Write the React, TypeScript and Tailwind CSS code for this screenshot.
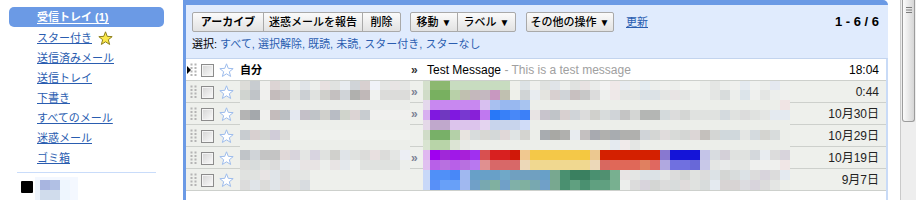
import React from 'react';

const BG = 'eceeea';
const rep = (c: string, n: number): string[] => Array(n).fill(c);

// pixelated (redacted) subject area, 10px cells, global grid from y=80, x=420
const SUBJECT: string[][] = [
  ['d4e0cc', ...rep('8cb870', 2), ...rep('c8dcc0', 6), 'eff0ec', 'dde3e6', 'eff0ee', 'e0e2e0', 'e0e4e8', 'eceeec', 'e0e2e0', 'e8e2e2', 'eaecea', 'f2f2f2', 'f0e8e8', 'e8ecf0', 'eceeec', 'e4ecf0', 'eceeec', 'f0f0ee', 'eceeec', 'f2f4f0', 'f2f4f0', 'eceeec', 'e4e6e4', 'eceeec', 'f0f0ee', 'e4eaf0', 'f0f2f0', 'eceeec', 'e4e8f0', 'eef0ee'],
  ['d0dcc8', ...rep('78b060', 2), 'b8d0a8', 'c0c0b0', 'c4b8bc', 'c4b8c0', 'c898c0', 'c0c0b0', 'eef0ea', 'd0d4d6', 'e8ecf0', 'e4e4e0', 'd8d0d0', 'd0d4d8', 'c8c0c0', 'c8c8c8', 'dcdcdc', 'eef0ee', 'eee8e8', 'e4e6e4', 'e4e6e4', 'dce2e6', 'dce2e6', 'e4e6e4', 'e8e4e4', 'e4e6e4', 'eceeec', 'eceeec', 'e4e6e4', 'd8dcdc', 'eceeec', 'dce4ea', 'eff0ee', 'e4e6e4', 'eceeec', 'eff0ee'],
  ['e4d8ec', ...rep('c888f0', 5), 'd8c0f0', 'a8c0f0', '98b8f0', '98b8f0', 'a8c4f0', ...rep(BG, 25), 'f0e4e4'],
  ['d8b0f0', '8018e0', '7038c0', '8018e0', '7838d0', '8820d8', 'c078f0', '2878f8', '3880f8', '4888f8', '3c80f8', 'e8e4e4', 'c8c4cc', 'c0c4c8', 'd8d0d0', 'd0d4d8', 'dcdcdc', 'd0d0cc', 'd8dcdc', 'd0d4d8', 'c4c4c4', 'd4d6d4', 'b4b6b4', 'b4b6b4', 'd4dadc', 'dcdcdc', 'd4d6d4', 'e0e2e0', 'e0e2e0', 'e0e2e0', 'd4dade', 'e0e2e0', 'dcdcdc', 'e0e2e0', 'e4e6e4', 'e4eaf0', 'e4eaf0'],
  ['e4d8e8', ...rep('c0a8cc', 2), ...rep('dcc4ec', 3), 'e4d4f0', ...rep('c8d4ec', 3), 'd0dcf8', ...rep(BG, 26)],
  ['d0dcc8', ...rep('78b068', 2), 'b4d0a8', 'e8e4e0', 'd8dcdc', 'd8d8d4', 'd4d8d8', 'e0d8d8', 'e0e4e4', 'd4d4d0', 'eceeea', 'a8acb0', 'a8a8a4', 'b0b0ae', 'e8ecf0', 'c4c0c0', 'a8aab0', 'b0b0ae', 'a8acb0', 'b0b0ae', 'b0b0ae', 'd0d4d8', 'd4d6d4', 'e0dcdc', 'd8dad8', 'd4d6d4', 'dcd6d6', 'c4c0bc', 'd4d6d4', 'd0d8dc', 'd0d8dc', 'e4e6e4', 'd4dade', 'd4d4d0', 'd8dcdc', 'eceeea'],
  ['d8e4d0', ...rep('b8d4a8', 2), 'dce4d4', 'e8eae6', ...rep(BG, 14), 'e4eaf0', 'f0eaea', 'e4e6e4', ...rep(BG, 15)],
  ['e0b8f0', 'a000f0', 'a028d8', 'a018e8', 'a820d8', 'a030f0', 'd85050', 'd82020', 'd82020', 'd01808', 'f0c890', ...rep('f4c848', 5), 'f4c840', 'ecc890', ...rep('d42000', 6), '8878d0', ...rep('1414d8', 3), 'c4c4e8', 'd8dce0', 'd4d0d8', 'e0e2e0', 'e0e2e0', 'd4d8dc', 'e8ecf0', 'dcdcdc', 'd8d4dc'],
  ['e0c0f0', 'b860e8', 'b870e0', 'b860e8', 'b870e0', 'b878f0', 'e09090', ...rep('d86868', 3), 'ecd8b8', ...rep('f0d890', 6), 'ecd8b8', 'd86860', 'e06858', 'e06858', 'e06858', 'e08060', 'e06860', 'b0a8e0', '7070e0', '7070e0', '6868d8', 'c8c8e8', 'e4e6e4', 'e8eaea', 'e4e6e4', 'e4e6e4', 'eff0ee', 'eff0ee', 'eff0ee', 'f0e6e6'],
  ['c8d8f8', '5090f8', '5090f8', '4888f8', 'a0b8f0', '68a0c8', '68a0c8', '68a0c8', '70a8c8', '70a0c0', '70a0c0', '70a0c0', '68a0c8', '78a890', '4a9070', '3a8060', '3a8060', '4a9070', '509070', '78b090', 'e8e4e4', 'e4e6e4', 'dce2e6', 'dce2e6', 'e4e6e4', 'dcdcdc', 'd4d6d4', 'e0e2e0', 'dcdcdc', 'dce2e6', 'd4d6d4', 'd8dcdc', 'dce2e6', 'dcdcdc', 'd8d4dc', 'dcdcdc', 'e4eaf0'],
  ['c8d8f8', '5890f8', '68a0f8', '68a0f8', 'a0b8f0', '70a0c8', '78a8b0', '80b0a0', '70a0c8', '80b0a8', '80b0a0', '78a8b0', '70a0c8', '78a890', '4a9070', '60a080', '4a9070', '60a080', '60a080', '78b090', 'eceeec', 'dcdcdc', 'd8d4dc', 'd4d6d4', 'dcdcdc', 'd8dcdc', 'e0dcdc', 'e0e2e0', 'd8dcdc', 'e4eaf0', 'd8d4d4', 'd8d4d4', 'dcdce0', 'd8d4dc', 'dcdcdc', 'e4e6e4', 'eceeea'],
];

// pixelated sender area, global grid from y=80, x=240
const SENDER: string[][] = [
  ['dcdcd8', 'c8ccd0', 'f0f0ee', 'dcd4d4', 'dcdcda', 'eceeec', 'e0e4e8', 'eceeec', 'e8e0e0', 'e0e2e0', 'e8ecf0', 'd0d4d8', 'd8d0d0', 'f0f2f8', 'e4e6e4', 'e8e4e4', 'e4e6e4'],
  ['d0d4d0', 'c0c4c8', 'f0f0ee', 'c4bcbc', 'c8c4c4', 'e0e2e0', 'ccd0d4', 'e0e2e0', 'd0d0cc', 'c4c0c0', 'd0d4d8', 'b0b0ae', 'c0b8b8', 'f0f2f0', 'dcdcda', 'dcdcda', 'dcdcda'],
  rep('ebedea', 17),
  ['b4b4b4', 'a4a8ac', 'f0f0ee', 'c4bcbc', 'bcc0c4', 'e4e8f0', 'c4c0c8', 'c0c4c8', 'd0d0cc', 'b8bcc4', 'd0d4cc', 'dcd4d4', 'c8ccd0', ...rep('f0f0ee', 4)],
  rep('edefeb', 17),
  ['c8ccd0', 'd8d0d0', 'd4d6d4', 'd0ccd8', 'dcdcda', ...rep('f0f2ee', 12)],
  rep(BG, 17),
  ['c0c4c8', 'd0d4d8', 'c4c4c4', 'c4c4c4', 'e0d8d8', 'd8d4dc', 'e4e6e4', 'd8d4e0', 'e0e2e0', 'd0d0cc', 'e0e4e8', 'e0e2e0', 'dcdcda', 'e8e0e0', 'dcdcda', 'e4e6e4', 'eceef4'],
  ['dcdcda', 'd8dcdc', 'e0e2e0', 'dcdcdc', 'e4e8ec', 'e8eaec', 'e8e4e4', 'e8e4e4', 'eceeec', 'e8e4e4', 'e4e8ec', 'eef0ee', 'e0e2e0', 'e0e2e0', 'e0e2e0', 'e0e2e0', 'eceeec'],
  ['e0e2e0', 'e0e2e0', 'e8e4e4', 'e0e4e8', 'dcdcdc', 'e4e6e4', 'e4e6e4'],
  ['dcdcdc', 'e0e4e8', 'dcdcda', 'e0e4e8', 'e0dcdc', 'e0e2e0', 'd8dce0'],
];

const NAV = ['送信済みメール', '送信トレイ', '下書き', 'すべてのメール', '迷惑メール', 'ゴミ箱'];

const ROWS = [
  { time: '0:44', chevron: true },
  { time: '10月30日', chevron: true },
  { time: '10月29日', chevron: false },
  { time: '10月19日', chevron: true },
  { time: '9月7日', chevron: false },
];

const STAR = 'M7.5 0.8 L9.26 5.37 L14.16 5.64 L10.35 8.73 L11.62 13.46 L7.5 10.8 L3.38 13.46 L4.65 8.73 L0.84 5.64 L5.74 5.37 Z';

function Mosaic({ grid, x, width, top }: { grid: string[][]; x: number; width: number; top: number }) {
  return (
    <svg width={width} height={22} viewBox={`${x} ${top} ${width} 22`} shapeRendering="crispEdges" className="block shrink-0">
      {grid.map((row, r) =>
        row.map((c, k) => <rect key={`${r}-${k}`} x={k * 10} y={r * 10} width={10} height={10} fill={`#${c}`} />)
      )}
    </svg>
  );
}

function StarOutline() {
  return (
    <svg width="15" height="15" viewBox="0 0 15 15" className="block">
      <path d={STAR} fill="#ffffff" stroke="#9dbcec" strokeWidth="1" strokeLinejoin="round" />
    </svg>
  );
}

function Dots() {
  return (
    <svg width="7" height="14" viewBox="0 0 7 14" className="block shrink-0">
      {[1.5, 5, 8.5, 12].map(y => (
        <g key={y}>
          <rect x="0.5" y={y - 1} width="2" height="2" fill="#b4b4b4" />
          <rect x="4.5" y={y - 1} width="2" height="2" fill="#b4b4b4" />
        </g>
      ))}
    </svg>
  );
}

function Checkbox() {
  return <div className="ml-[4px] h-[13px] w-[13px] shrink-0 border border-[#8c8c8c] bg-gradient-to-br from-[#d4d4d4] to-[#fbfbfb] shadow-[inset_0_0_0_1px_#f4f4f4]" />;
}

function Btn({ children, w, cls = '' }: { children: React.ReactNode; w: string; cls?: string }) {
  return (
    <div className={`${w} ${cls} flex h-[20px] items-center justify-center border border-[#a9a9a9] bg-gradient-to-b from-[#fbfbfb] to-[#e2e2e2] text-[11px] text-black`}>
      {children}
    </div>
  );
}

export default function App() {
  return (
    <div className="flex h-[200px] w-[916px] overflow-hidden bg-white font-['Liberation_Sans','Noto_Sans_CJK_JP',sans-serif]">
      {/* Labels */}
      <nav className="w-[182px] shrink-0 pt-[7px] text-[11px]">
        <div className="ml-[9px] flex h-[20px] w-[155px] items-center rounded-[5px] bg-[#6b9ae5] pl-[28px] font-bold text-white">
          <span className="inline-block border-b border-white leading-[12px]">受信トレイ (1)</span>
        </div>
        <div className="mt-[1px] flex h-[20px] items-center pl-[37px]">
          <span className="text-[#2a5db0] underline [text-decoration-skip-ink:none]">スター付き</span>
          <svg width="15" height="15" viewBox="0 0 15 15" className="ml-[6px] block">
            <path d={STAR} fill="#fbe84a" stroke="#8d7f1c" strokeWidth="1" strokeLinejoin="round" />
          </svg>
        </div>
        {NAV.map(n => (
          <div key={n} className="flex h-[20px] items-center pl-[37px]">
            <span className="text-[#2a5db0] underline [text-decoration-skip-ink:none]">{n}</span>
          </div>
        ))}
        <div className="ml-[17px] mt-[4px] h-px w-[139px] bg-[#c9dcfa]" />
        <div className="mt-[4px] flex h-[23px] items-start">
          <div className="ml-[21px] mt-[4px] h-[12px] w-[12px] rounded-[1px] bg-black" />
          <svg width="43" height="23" viewBox="0 0 43 23" shapeRendering="crispEdges" className="ml-[2px] block">
            <rect x="0" y="0" width="43" height="23" fill="#f4f8ff" />
            <rect x="0" y="3" width="5" height="20" fill="#eef4fc" />
            <rect x="5" y="3" width="10" height="10" fill="#a8b5e0" />
            <rect x="15" y="3" width="10" height="10" fill="#b1c0e4" />
            <rect x="5" y="13" width="20" height="10" fill="#d0dcec" />
            <rect x="25" y="3" width="10" height="20" fill="#eef6fe" />
          </svg>
        </div>
      </nav>

      {/* Mail panel */}
      <div className="ml-[1px] flex h-[200px] w-[705px] shrink-0 flex-col rounded-tr-[5px] border-l-[3px] border-t-[5px] border-[#6b9ae5]">
        <div className="h-[53px] bg-[#e0ebfd] pl-[6px] pr-[9px] pt-[7px]">
          <div className="flex h-[20px] items-center">
            <Btn w="w-[72px]" cls="rounded-l-[2px] font-bold">アーカイブ</Btn>
            <Btn w="w-[100px]" cls="-ml-px font-medium">迷惑メールを報告</Btn>
            <Btn w="w-[39px]" cls="-ml-px rounded-r-[2px] font-medium">削除</Btn>
            <Btn w="w-[48px]" cls="ml-[9px] rounded-l-[2px] font-medium">
              移動<span className="ml-[3px] text-[10px]">▼</span>
            </Btn>
            <Btn w="w-[59px]" cls="-ml-px rounded-r-[2px] font-medium">
              ラベル<span className="ml-[3px] text-[10px]">▼</span>
            </Btn>
            <Btn w="w-[88px]" cls="ml-[10px] rounded-[2px] font-medium">
              その他の操作<span className="ml-[3px] text-[10px]">▼</span>
            </Btn>
            <span className="ml-[12px] text-[11px] text-[#2a5db0] underline [text-decoration-skip-ink:none]">更新</span>
            <span className="ml-auto text-[13px] font-bold text-black">1 - 6 / 6</span>
          </div>
          <div className="mt-[4px] flex h-[16px] items-center text-[11px]">
            <span className="text-black">選択:</span>
            <span className="ml-[3px] text-[#2a5db0]">すべて, 選択解除, 既読, 未読, スター付き, スターなし</span>
          </div>
        </div>

        <div className="flex-1 border-r-[2px] border-t border-r-[#c9dbf7] border-t-[#c3d4ee] bg-white text-[12px]">
          {/* unread row */}
          <div className="flex h-[22px] items-center bg-white shadow-[inset_0_-1px_0_#cdd0cc]">
            <div className="w-[4px] shrink-0">
              <svg width="4" height="8" viewBox="0 0 4 8" className="ml-[1px] block">
                <path d="M0 0 L4 4 L0 8 Z" fill="#000" />
              </svg>
            </div>
            <Dots />
            <Checkbox />
            <div className="ml-[5px] shrink-0"><StarOutline /></div>
            <div className="ml-[6px] w-[170px] shrink-0 text-[11px] font-bold text-black">自分</div>
            <div className="w-[13px] shrink-0 pl-[1px] font-bold text-[#333]">»</div>
            <div className="flex-1 truncate pl-[4px] text-black">
              Test Message<span className="text-[#a0a0a0]"> - This is a test message</span>
            </div>
            <div className="shrink-0 pr-[7px] text-black">18:04</div>
          </div>

          {ROWS.map((r, i) => (
            <div key={r.time} className="flex h-[22px] items-center bg-[#eef0ec] shadow-[inset_0_-1px_0_#cdd0cc]">
              <div className="w-[4px] shrink-0" />
              <Dots />
              <Checkbox />
              <div className="ml-[5px] shrink-0"><StarOutline /></div>
              <div className="ml-[6px] shrink-0">
                <Mosaic grid={SENDER} x={0} width={170} top={1 + 22 * i} />
              </div>
              <div className="w-[13px] shrink-0 pl-[1px] font-bold text-[#7b8295]">{r.chevron ? '»' : ''}</div>
              <div className="flex-1">
                <Mosaic grid={SUBJECT} x={3} width={367} top={1 + 22 * i} />
              </div>
              <div className="shrink-0 pr-[7px] text-[#222]">{r.time}</div>
            </div>
          ))}
        </div>
      </div>

      {/* Scrollbar */}
      <div className="ml-[12px] h-[200px] w-[16px] shrink-0 border-l border-[#cacaca] bg-[#eeeeee]">
        <div className="ml-[1px] flex h-[122px] w-[13px] justify-center rounded-b-[3px] border border-t-0 border-[#9c9c9c] bg-gradient-to-r from-[#fbfbfb] to-[#d6d6d6] pt-[7px]">
          <svg width="6" height="6" viewBox="0 0 6 6" className="block">
            <rect x="0" y="0" width="6" height="1" fill="#7c7c7c" />
            <rect x="0" y="2.5" width="6" height="1" fill="#7c7c7c" />
            <rect x="0" y="5" width="6" height="1" fill="#7c7c7c" />
          </svg>
        </div>
      </div>
    </div>
  );
}
